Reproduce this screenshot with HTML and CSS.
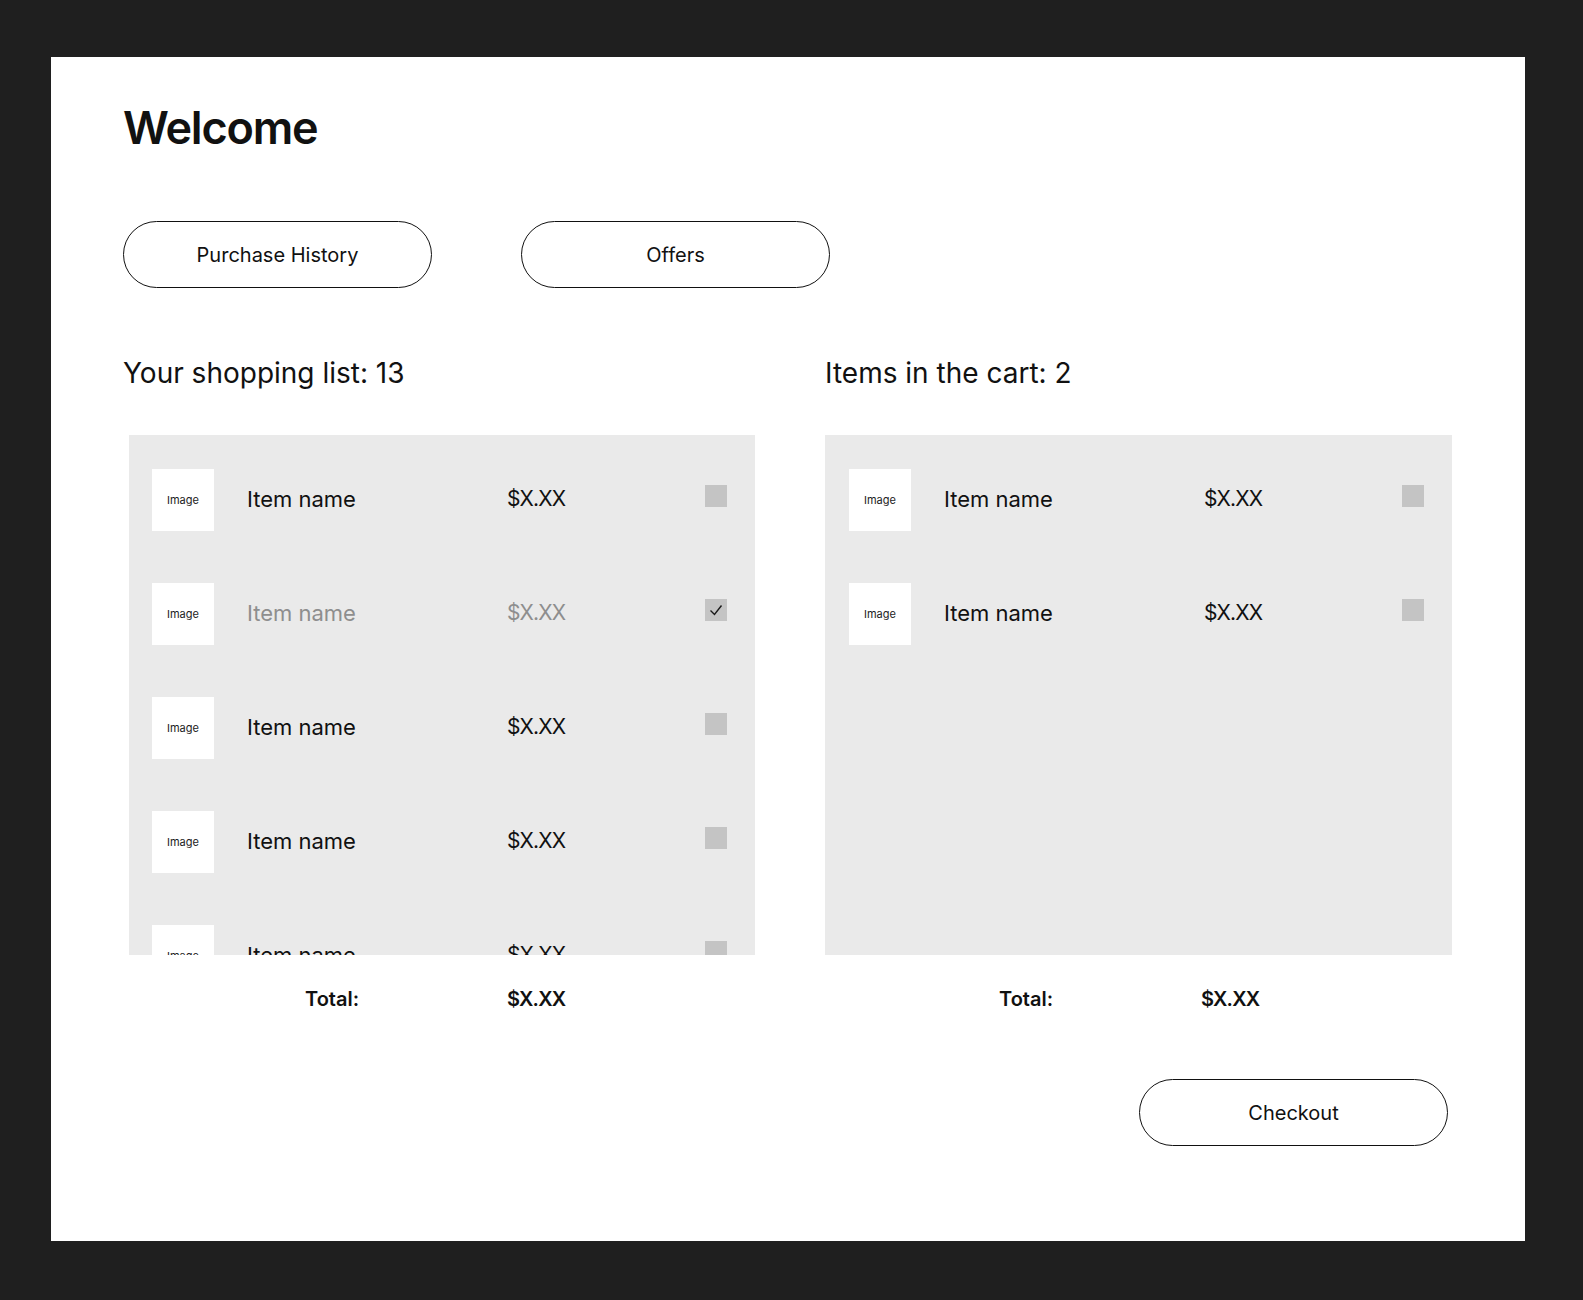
FILE: index.html
```html
<!DOCTYPE html>
<html lang="en">

<head>
    <meta charset="UTF-8">
    <meta name="viewport" content="width=device-width, initial-scale=1.0">
    <title>Welcome</title>
    <link rel="stylesheet" href="styles.css">
</head>

<body>

    <div class="page">
        <h1 class="title">Welcome</h1>

        <div class="nav">
            <button class="pill">Purchase History</button>
            <button class="pill">Offers</button>
        </div>

        <div class="columns">
            <section class="column">
                <h2 class="column-title">Your shopping list: 13</h2>
                <div class="list list-shopping">
                    <div class="panel">
                        <div class="item">
                            <div class="thumb">Image</div>
                            <span class="item-name">Item name</span>
                            <span class="item-price">$X.XX</span>
                            <span class="check"></span>
                        </div>
                        <div class="item done">
                            <div class="thumb">Image</div>
                            <span class="item-name">Item name</span>
                            <span class="item-price">$X.XX</span>
                            <span class="check">
                                <svg width="22" height="22" viewBox="0 0 22 22">
                                    <polyline points="5.5,11.5 9.5,15.5 16.5,6.5" fill="none" stroke="#1a1a1a" stroke-width="1.4" />
                                </svg>
                            </span>
                        </div>
                        <div class="item">
                            <div class="thumb">Image</div>
                            <span class="item-name">Item name</span>
                            <span class="item-price">$X.XX</span>
                            <span class="check"></span>
                        </div>
                        <div class="item">
                            <div class="thumb">Image</div>
                            <span class="item-name">Item name</span>
                            <span class="item-price">$X.XX</span>
                            <span class="check"></span>
                        </div>
                        <div class="item">
                            <div class="thumb">Image</div>
                            <span class="item-name">Item name</span>
                            <span class="item-price">$X.XX</span>
                            <span class="check"></span>
                        </div>
                        <div class="item">
                            <div class="thumb">Image</div>
                            <span class="item-name">Item name</span>
                            <span class="item-price">$X.XX</span>
                            <span class="check"></span>
                        </div>
                    </div>
                    <div class="total">
                        <span class="total-label">Total:</span>
                        <span class="total-price">$X.XX</span>
                    </div>
                </div>
            </section>

            <section class="column">
                <h2 class="column-title">Items in the cart: 2</h2>
                <div class="list list-cart">
                    <div class="panel">
                        <div class="item">
                            <div class="thumb">Image</div>
                            <span class="item-name">Item name</span>
                            <span class="item-price">$X.XX</span>
                            <span class="check"></span>
                        </div>
                        <div class="item">
                            <div class="thumb">Image</div>
                            <span class="item-name">Item name</span>
                            <span class="item-price">$X.XX</span>
                            <span class="check"></span>
                        </div>
                    </div>
                    <div class="total">
                        <span class="total-label">Total:</span>
                        <span class="total-price">$X.XX</span>
                    </div>
                </div>
            </section>
        </div>

        <div class="actions">
            <button class="pill">Checkout</button>
        </div>
    </div>

</body>

</html>
```

FILE: styles.css
```css
body {
    font-family: Inter, "Noto Sans", sans-serif;
    background-color: #1f1f1f;
    color: #111;
    margin: 0;
    padding: 57px 58px 58px 51px;
}

.page {
    background-color: #fff;
    padding: 48px 73px 95px 72px;
}

.title {
    font-size: 45px;
    line-height: 45px;
    font-weight: 600;
    margin: 0;
    letter-spacing: -1.2px;
}

.nav {
    display: flex;
    gap: 89px;
    margin-top: 71px;
}

.pill {
    width: 309px;
    height: 67px;
    border: 1.5px solid #111;
    border-radius: 34px;
    background-color: #fff;
    font-family: inherit;
    font-size: 20px;
    color: #111;
    cursor: pointer;
}

.columns {
    display: grid;
    grid-template-columns: 632px 627px;
    column-gap: 70px;
    margin-top: 67px;
}

.column-title {
    font-size: 28px;
    line-height: 36px;
    font-weight: 400;
    margin: 0 0 44px 0;
}

.list-shopping {
    margin-left: 6px;
}

.panel {
    background-color: #eaeaea;
    height: 520px;
    overflow: hidden;
    box-sizing: border-box;
    padding: 34px 0 0 23px;
    display: flex;
    flex-direction: column;
    gap: 52px;
}

.list-cart .panel {
    padding-left: 24px;
}

.item {
    display: grid;
    grid-template-columns: 95px 260px 198px 22px;
    align-items: center;
    height: 62px;
    flex-shrink: 0;
}

.thumb {
    width: 62px;
    height: 62px;
    background-color: #fff;
    display: flex;
    align-items: center;
    justify-content: center;
    font-size: 11px;
    color: #222;
}

.item-name {
    font-size: 22px;
    font-weight: 400;
    margin-top: -3px;
}

.item-price {
    font-size: 21px;
    font-weight: 400;
    letter-spacing: -0.8px;
    margin-top: -3px;
}

.done .item-name,
.done .item-price {
    color: #8e8e8e;
}

.check {
    width: 22px;
    height: 22px;
    background-color: #c4c4c4;
    align-self: start;
    margin-top: 16px;
}

.check svg {
    display: block;
}

.total {
    display: flex;
    padding-left: 176px;
    margin-top: 31px;
    font-size: 20px;
    line-height: 27px;
    font-weight: 600;
}

.list-cart .total {
    padding-left: 174px;
}

.total-label {
    width: 202px;
}

.total-price {
    letter-spacing: -0.8px;
}

.actions {
    display: flex;
    justify-content: flex-end;
    padding-right: 4px;
    margin-top: 66px;
}
```
